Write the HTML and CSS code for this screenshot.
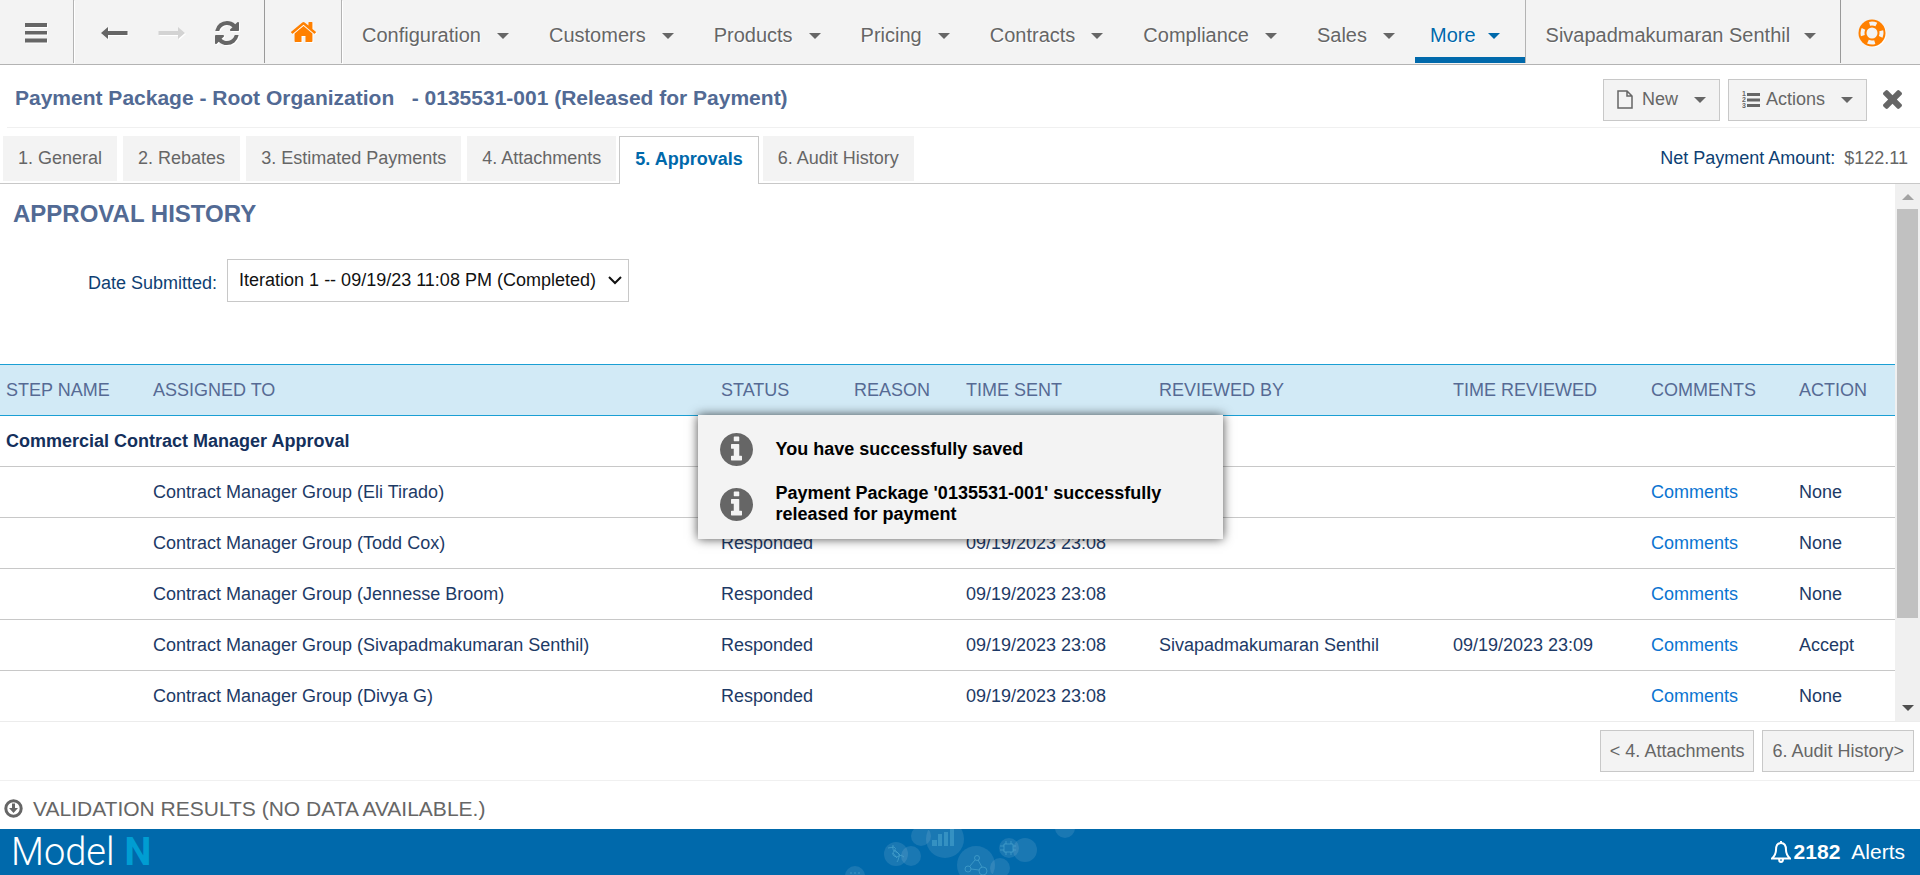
FILE: index.html
```html
<!DOCTYPE html>
<html lang="en">
<head>
<meta charset="utf-8">
<title>Payment Package - Approvals</title>
<link rel="stylesheet" href="styles.css">
</head>
<body>
<header class="topbar">
  <button class="tool tool-menu" aria-label="Menu"><svg width="24" height="20" viewBox="0 0 24 20"><path d="M1 0h22v4H1zM1 8h22v3.500H1zM1 15.500h22v4H1z"/></svg></button>
  <div class="tool-group">
    <button class="tool" aria-label="Back"><svg width="27" height="12" viewBox="0 0 27 12"><path d="M0 6L7 0v4h19.500v4H7v4z"/></svg></button>
    <button class="tool tool-off" aria-label="Forward" disabled><svg width="27" height="12" viewBox="0 0 27 12"><path d="M27 6L20 0v4H.5v4H20v4z"/></svg></button>
    <button class="tool" aria-label="Refresh"><svg width="24" height="24" viewBox="128 128 1536 1536"><path d="M1639 1056q0 5-1 7-64 268-268 434.500t-478 166.500q-146 0-282.500-55t-243.500-157l-129 129q-19 19-45 19t-45-19-19-45v-448q0-26 19-45t45-19h448q26 0 45 19t19 45-19 45l-137 137q71 66 161 102t187 36q134 0 250-65t186-179q11-17 53-117 8-23 30-23h192q13 0 22.500 9.500t9.500 22.500zm25-800v448q0 26-19 45t-45 19h-448q-26 0-45-19t-19-45 19-45l138-138q-148-137-349-137-134 0-250 65t-186 179q-11 17-53 117-8 23-30 23h-199q-13 0-22.500-9.500t-9.500-22.500v-7q65-268 270-434.500t480-166.500q146 0 284 55.500t245 156.500l130-129q19-19 45-19t45 19 19 45z"/></svg></button>
  </div>
  <button class="tool tool-home" aria-label="Home"><svg width="25" height="20" viewBox="90 250 1612 1290"><path d="M1472 992v480q0 26-19 45t-45 19h-384v-384h-256v384h-384q-26 0-45-19t-19-45v-480q0-1 .5-3t.5-3l575-474 575 474q1 2 1 6zm223-69l-62 74q-8 9-21 11h-3q-13 0-21-7l-692-577-692 577q-12 8-24 7-13-2-21-11l-62-74q-8-10-7-23.500t11-21.500l719-599q32-26 76-26t76 26l244 204v-195q0-14 9-23t23-9h192q14 0 23 9t9 23v408l219 182q10 8 11 21.500t-7 23.500z"/></svg></button>
  <nav class="nav">
    <a class="nav-item" href="#">Configuration<span class="caret"></span></a>
    <a class="nav-item" href="#">Customers<span class="caret"></span></a>
    <a class="nav-item" href="#">Products<span class="caret"></span></a>
    <a class="nav-item" href="#">Pricing<span class="caret"></span></a>
    <a class="nav-item" href="#">Contracts<span class="caret"></span></a>
    <a class="nav-item" href="#">Compliance<span class="caret"></span></a>
    <a class="nav-item" href="#">Sales<span class="caret"></span></a>
    <a class="nav-item nav-more" href="#">More<span class="caret"></span></a>
  </nav>
  <a class="nav-item user" href="#">Sivapadmakumaran Senthil<span class="caret"></span></a>
  <button class="tool tool-help" aria-label="Help"><svg width="28" height="28" viewBox="0 0 28 28"><circle class="ring" cx="14" cy="14" r="13.500"/><circle class="cut" cx="14" cy="14" r="9.500"/><circle class="hole" cx="14" cy="14" r="5.500"/></svg></button>
</header>

<section class="titlebar">
  <h1 class="title">Payment Package - Root Organization &nbsp; - 0135531-001 (Released for Payment)</h1>
  <button class="btn"><svg class="ico-file" width="16" height="19" viewBox="0 0 16 19"><path d="M1 1h9l5 5v12H1zM10 1v5h5"/></svg>New<span class="caret"></span></button>
  <button class="btn btn-actions"><svg width="18" height="19" viewBox="0 0 18 19"><path d="M5 3h13v3H5zM5 8.500h13v3H5zM5 14h13v3H5z"/><text x="0" y="6">1</text><text x="0" y="12">2</text><text x="0" y="18">3</text></svg>Actions<span class="caret"></span></button>
  <button class="close" aria-label="Close"><svg width="19" height="19" viewBox="302 366 1188 1188"><path d="M1490 1322q0 40-28 68l-136 136q-28 28-68 28t-68-28l-294-294-294 294q-28 28-68 28t-68-28l-136-136q-28-28-28-68t28-68l294-294-294-294q-28-28-28-68t28-68l136-136q28-28 68-28t68 28l294 294 294-294q28-28 68-28t68 28l136 136q28 28 28 68t-28 68l-294 294 294 294q28 28 28 68z"/></svg></button>
</section>

<div class="tabbar">
  <nav class="tabs">
    <a class="tab" href="#">1. General</a>
    <a class="tab" href="#">2. Rebates</a>
    <a class="tab" href="#">3. Estimated Payments</a>
    <a class="tab" href="#">4. Attachments</a>
    <a class="tab tab-on" href="#">5. Approvals</a>
    <a class="tab" href="#">6. Audit History</a>
  </nav>
  <p class="net"><span class="net-label">Net Payment Amount:</span> <span>$122.11</span></p>
</div>

<main class="content">
  <div class="pane">
    <h2 class="heading">APPROVAL HISTORY</h2>
    <div class="field">
      <label for="submitted">Date Submitted:</label>
      <div class="select-box">
        <select id="submitted"><option>Iteration 1 -- 09/19/23 11:08 PM (Completed)</option></select>
        <svg class="chevron" width="14" height="9" viewBox="0 0 14 9"><path d="M1 1l6 6 6-6"/></svg>
      </div>
    </div>
    <table class="history">
      <colgroup><col class="c-step"><col class="c-assigned"><col class="c-status"><col class="c-reason"><col class="c-sent"><col class="c-by"><col class="c-reviewed"><col class="c-comments"><col class="c-action"></colgroup>
      <thead><tr><th>STEP NAME</th><th>ASSIGNED TO</th><th>STATUS</th><th>REASON</th><th>TIME SENT</th><th>REVIEWED BY</th><th>TIME REVIEWED</th><th>COMMENTS</th><th>ACTION</th></tr></thead>
      <tbody>
        <tr class="step"><td colspan="9">Commercial Contract Manager Approval</td></tr>
        <tr><td></td><td>Contract Manager Group (Eli Tirado)</td><td></td><td></td><td></td><td></td><td></td><td><a href="#">Comments</a></td><td>None</td></tr>
        <tr><td></td><td>Contract Manager Group (Todd Cox)</td><td>Responded</td><td></td><td>09/19/2023 23:08</td><td></td><td></td><td><a href="#">Comments</a></td><td>None</td></tr>
        <tr><td></td><td>Contract Manager Group (Jennesse Broom)</td><td>Responded</td><td></td><td>09/19/2023 23:08</td><td></td><td></td><td><a href="#">Comments</a></td><td>None</td></tr>
        <tr><td></td><td>Contract Manager Group (Sivapadmakumaran Senthil)</td><td>Responded</td><td></td><td>09/19/2023 23:08</td><td>Sivapadmakumaran Senthil</td><td>09/19/2023 23:09</td><td><a href="#">Comments</a></td><td>Accept</td></tr>
        <tr><td></td><td>Contract Manager Group (Divya G)</td><td>Responded</td><td></td><td>09/19/2023 23:08</td><td></td><td></td><td><a href="#">Comments</a></td><td>None</td></tr>
      </tbody>
    </table>
  </div>
  <div class="scrollbar" aria-hidden="true">
    <span class="arrow arrow-up"></span>
    <div class="track"><div class="thumb"></div></div>
    <span class="arrow arrow-down"></span>
  </div>
</main>

<div class="pager">
  <button class="btn">&lt; 4. Attachments</button>
  <button class="btn">6. Audit History&gt;</button>
</div>

<div class="validation">
  <svg width="19" height="19" viewBox="0 0 19 19"><circle cx="9.500" cy="9.500" r="7.700"/><path d="M8 4.500h3v4.500h3l-4.500 5L5 9h3z"/></svg>
  VALIDATION RESULTS (NO DATA AVAILABLE.)
</div>

<footer class="footer">
  <div class="logo"><span>Model</span><b>N</b></div>
  <svg class="network" width="280" height="46" viewBox="0 0 280 46">
    <g class="bubbles">
      <circle cx="35" cy="47" r="10"/><circle cx="76" cy="25" r="12"/><circle cx="91" cy="27" r="10"/>
      <circle cx="101" cy="7" r="10"/><circle cx="125" cy="10" r="19"/><circle cx="156" cy="36" r="19"/>
      <circle cx="180" cy="39" r="10"/><circle cx="189" cy="19" r="10"/><circle cx="205" cy="21" r="12"/><circle cx="245" cy="-1" r="10"/>
    </g>
    <path class="bars" d="M112 11h5v6h-5zM118 5h4v12h-4zM124 3h4v14h-4zM130 0h4v17h-4z"/>
    <g class="lines">
      <circle cx="157" cy="29" r="2.500"/><circle cx="148" cy="40" r="3"/><circle cx="163" cy="42" r="4"/>
      <path d="M155 31l-5 6M158 31l4 7M151 40l8 1"/>
      <path d="M184 15h9v8h-9zM186 12v3M191 12v3M186 23v3M191 23v3M180 17h4M180 21h4M193 17h3M193 21h3"/>
      <path d="M68 19l6-1q3 1 0 4t0 5 5 0 5 1M73 16q-1 6 3 7t3 5-2 5M75 21l5 5M73 24l4 5"/>
      <path d="M30 44h2M34 44h2M38 44h2"/>
    </g>
  </svg>
  <a class="alerts" href="#"><svg width="20" height="22" viewBox="0 0 20 22"><path d="M10 2C6 2 5 5.500 5 9c0 4-1.500 6-4 8.500h18C16.500 15 15 13 15 9c0-3.500-1-7-5-7zM10 2V0M8 18q0 3 2 3t2-3"/></svg><b>2182</b> <span>Alerts</span></a>
</footer>

<div class="toast" role="status">
  <div class="msg"><svg width="33" height="33" viewBox="128 128 1536 1536"><path d="M1152 1376v-160q0-14-9-23t-23-9h-96v-512q0-14-9-23t-23-9h-320q-14 0-23 9t-9 23v160q0 14 9 23t23 9h96v320h-96q-14 0-23 9t-9 23v160q0 14 9 23t23 9h448q14 0 23-9t9-23zm-128-896v-160q0-14-9-23t-23-9h-192q-14 0-23 9t-9 23v160q0 14 9 23t23 9h192q14 0 23-9t9-23zm640 416q0 209-103 385.500t-279.500 279.500-385.500 103-385.500-103-279.500-279.500-103-385.500 103-385.500 279.500-279.500 385.500-103 385.500 103 279.500 279.500 103 385.500z"/></svg><p>You have successfully saved</p></div>
  <div class="msg"><svg width="33" height="33" viewBox="128 128 1536 1536"><path d="M1152 1376v-160q0-14-9-23t-23-9h-96v-512q0-14-9-23t-23-9h-320q-14 0-23 9t-9 23v160q0 14 9 23t23 9h96v320h-96q-14 0-23 9t-9 23v160q0 14 9 23t23 9h448q14 0 23-9t9-23zm-128-896v-160q0-14-9-23t-23-9h-192q-14 0-23 9t-9 23v160q0 14 9 23t23 9h192q14 0 23-9t9-23zm640 416q0 209-103 385.500t-279.500 279.500-385.500 103-385.500-103-279.500-279.500-103-385.500 103-385.500 279.500-279.500 385.500-103 385.500 103 279.500 279.500 103 385.500z"/></svg><p>Payment Package '0135531-001' successfully released for payment</p></div>
</div>
</body>
</html>
```

FILE: styles.css
```css
* { box-sizing: border-box; }
body {
  margin: 0;
  height: 100vh;
  display: flex;
  flex-direction: column;
  background: #fff;
  color: #666;
  font: 18px/21px "Liberation Sans", Arial, sans-serif;
}
a { color: inherit; text-decoration: none; }
button, select { font: inherit; color: inherit; }
button { border: 0; padding: 0; background: none; }
svg { fill: currentColor; flex: none; display: block; }
h1, h2, p { margin: 0; }

.caret {
  border: 6px solid transparent;
  border-top-color: #666;
  border-bottom: 0;
}

/* top navigation */
.topbar {
  flex: none;
  display: flex;
  height: 65px;
  background: #f3f3f3;
  border-bottom: 1px solid #b3b3b3;
  padding-bottom: 1px;
  font-size: 20px;
}
.tool { flex: none; display: flex; align-items: center; justify-content: center; filter: drop-shadow(1px 1px 0 #fff); }
.tool-menu { width: 74px; padding-right: 2px; border-right: 1px solid #b3b3b3; padding-top: 2px; }
.tool-group {
  flex: none;
  display: flex;
  align-items: center;
  gap: 30px;
  padding: 2px 25px 0 27px;
  border-right: 1px solid #999;
}
.tool-off { color: #d3d3d3; }
.tool-home { width: 77px; color: #ff8000; border-right: 1px solid #b3b3b3; }
.nav { flex: 1; display: flex; border-right: 1px solid #b3b3b3; }
.nav-item {
  display: flex;
  align-items: center;
  gap: 16px;
  padding: 8px 20px 0;
  white-space: nowrap;
  text-shadow: 1px 1px 1px #fff;
}
.nav-more {
  gap: 12px;
  margin-left: auto;
  padding: 14px 25px 0 15px;
  border-bottom: 6px solid #0069ab;
  color: #0069ab;
}
.nav-more .caret { border-top-color: #0069ab; }
.user { flex: none; gap: 14px; padding: 8px 24px 0 20px; border-right: 1px solid #999; }
.tool-help { width: 81px; padding-right: 20px; padding-top: 2px; color: #ff8000; }
.cut { fill: none; stroke: #f3f3f3; stroke-width: 4; stroke-dasharray: 7 8; stroke-dashoffset: 3; }
.hole { fill: #f3f3f3; }

/* page title */
.titlebar {
  flex: none;
  display: flex;
  align-items: center;
  gap: 8px;
  height: 63px;
  margin-left: 7px;
  padding: 7px 18px 0 8px;
  border-bottom: 1px solid #f0f0f0;
}
.title { flex: 1; font-size: 21px; line-height: 24px; color: #526a94; padding-bottom: 4px; }
.btn {
  display: flex;
  align-items: center;
  height: 42px;
  padding: 0 9px;
  background: #f3f3f3;
  border: 1px solid #c8c8c8;
  white-space: nowrap;
}
.titlebar .btn { padding: 0 13px; }
.btn svg { margin-right: 9px; }
.btn .caret { margin-left: 16px; }
.ico-file { fill: none; stroke: currentColor; stroke-width: 1.5; }
.btn-actions svg { margin-right: 6px; }
.btn-actions text { font: bold 7px "Liberation Sans", Arial, sans-serif; }
.close { margin-left: 8px; }

/* tabs */
.tabbar {
  flex: none;
  display: flex;
  justify-content: space-between;
  height: 56px;
  padding: 8px 12px 0 3px;
  border-bottom: 1px solid #c8c8c8;
}
.tabs { display: flex; gap: 6px; }
.tab { height: 45px; padding: 12px 15px; background: #f3f3f3; white-space: nowrap; }
.tab-on {
  height: 48px;
  margin: 0 -2px 0 -3px;
  background: #fff;
  border: 1px solid #c8c8c8;
  border-bottom: 0;
  font-weight: bold;
  color: #0069ab;
}
.net { padding: 12px 0; }
.net-label { color: #0e3f73; margin-right: 4px; }

/* content */
.content { flex: 1; min-height: 0; display: flex; border-bottom: 1px solid #ececec; }
.pane { flex: 1; min-width: 0; overflow: hidden; }
.heading { padding: 16px 13px 0; font-size: 24px; line-height: 28px; color: #526a94; }
.field { display: flex; gap: 10px; padding: 31px 0 62px 88px; color: #0e3f73; }
.field label { padding-top: 14px; }
.select-box { display: grid; align-items: center; }
.select-box > * { grid-area: 1 / 1; }
.select-box select {
  appearance: none;
  width: 402px;
  height: 43px;
  padding: 0 9px 0 11px;
  border: 1px solid #c8c8c8;
  border-radius: 0;
  background: #fff;
  color: #111;
}
.chevron { justify-self: end; margin-right: 7px; fill: none; stroke: #111; stroke-width: 2; pointer-events: none; }

.history { width: 100%; table-layout: fixed; border-collapse: collapse; color: #1d3a66; }
.c-step { width: 147px; }
.c-assigned { width: 568px; }
.c-status { width: 133px; }
.c-reason { width: 112px; }
.c-sent { width: 193px; }
.c-by { width: 294px; }
.c-reviewed { width: 198px; }
.c-comments { width: 148px; }
.c-action { width: 102px; }
.history th, .history td {
  height: 51px;
  padding: 0 6px;
  text-align: left;
  white-space: nowrap;
  border-bottom: 1px solid #c8c8c8;
}
.history th {
  font-weight: normal;
  color: #566a94;
  background: #d2eaf6;
  border-top: 1px solid #1a9fd4;
  border-bottom-color: #1a9fd4;
}
.history .step td { font-weight: bold; color: #14305c; }
.history a { color: #0b74d1; }

.scrollbar { width: 25px; display: flex; flex-direction: column; align-items: center; background: #f0f0f0; }
.arrow { border: 6px solid transparent; }
.arrow-up { border-top: 0; border-bottom-color: #a3a3a3; margin: 10px 0 9px; }
.arrow-down { border-bottom: 0; border-top-color: #505050; margin: 9px 0 10px; }
.track { flex: 1; align-self: stretch; padding: 0 2px; }
.thumb { height: 84%; background: #c1c1c1; }

/* bottom area */
.pager {
  flex: none;
  display: flex;
  justify-content: flex-end;
  align-items: center;
  gap: 8px;
  height: 59px;
  padding-right: 6px;
  border-bottom: 1px solid #f0f0f0;
}
.validation {
  flex: none;
  display: flex;
  align-items: center;
  gap: 10px;
  height: 48px;
  padding: 6px 4px 0;
  font-size: 21px;
}
.validation circle { fill: none; stroke: currentColor; stroke-width: 3; }
.footer {
  flex: none;
  display: grid;
  grid-template-columns: 1fr auto 1fr;
  align-items: center;
  height: 46px;
  background: #0069ab;
  color: #fff;
}
.logo {
  display: flex;
  gap: 10px;
  padding-left: 11px;
  font: 300 38px/46px "Roboto", sans-serif;
  white-space: nowrap;
}
.logo b { font-weight: 700; color: #009dd2; }
.network { overflow: hidden; }
.bubbles { fill: rgba(255, 255, 255, .1); }
.bars { fill: rgba(80, 170, 210, .5); }
.lines { fill: none; stroke: rgba(80, 170, 210, .6); stroke-width: 1; }
.alerts { justify-self: end; display: flex; align-items: center; gap: 3px; padding-right: 15px; font-size: 21px; line-height: 24px; }
.alerts svg { fill: none; stroke: #fff; stroke-width: 2; }
.alerts span { margin-left: 8px; }

/* notification */
.toast {
  position: absolute;
  top: 415px;
  left: 0;
  right: 0;
  width: 525px;
  margin: 0 auto;
  padding: 16px 22px 14px;
  display: grid;
  gap: 16px;
  background: #f3f3f3;
  box-shadow: 0 0 10px rgba(0, 0, 0, .7);
}
.msg { display: flex; align-items: center; gap: 23px; min-height: 36px; font-weight: bold; }
.msg p { color: #000; }
```
